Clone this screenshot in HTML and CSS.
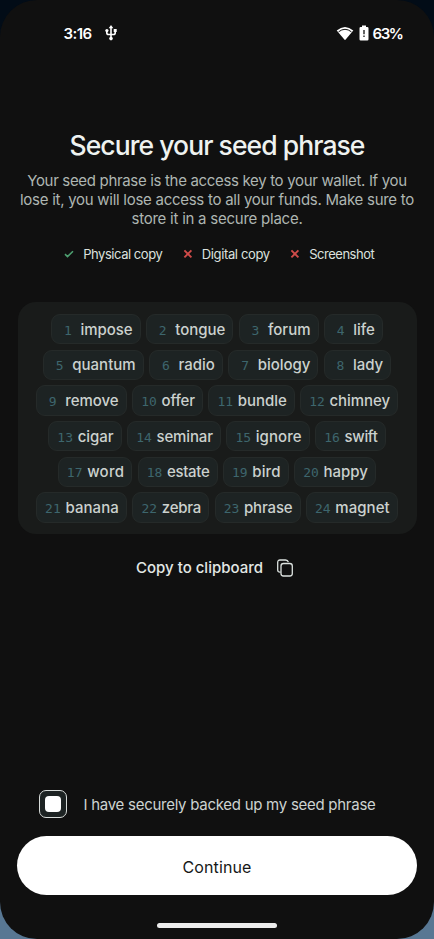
FILE: index.html
```html
<!DOCTYPE html>
<html lang="en">
<head>
<meta charset="utf-8">
<title>Secure your seed phrase</title>
<link rel="stylesheet" href="styles.css">
</head>
<body>
<div class="screen">
  <header class="status">
    <span class="time"><span data-w="28">3:16</span></span>
    <svg class="usb" viewBox="0 0 12 16" width="12" height="16"><path d="M6 2v11M1.8 5.5v2.2q0 1.8 1.8 1.8h4.8q1.8 0 1.8-1.8V5" fill="none" stroke="#fff" stroke-width="1.6"/><path d="M6 0l2.3 3.3H3.7z" fill="#fff"/><circle cx="1.9" cy="5.6" r="1.6" fill="#fff"/><path d="M8.7 4h3v3h-3z" fill="#fff"/><circle cx="6" cy="13.6" r="1.8" fill="#fff"/></svg>
    <svg class="wifi" viewBox="0 0 18 15" width="18" height="15"><path d="M.7 4.4Q9-2.6 17.3 4.4L9 14.3z" fill="#fff"/><path d="M2.6 5.8Q9 .8 15.4 5.8" fill="none" stroke="#101010" stroke-width="1"/></svg>
    <svg class="battery" viewBox="0 0 10 16" width="10" height="16"><path d="M3 .5h4V2h1.3q1.2 0 1.2 1.2v11q0 1.3-1.2 1.3H1.7q-1.2 0-1.2-1.3v-11Q.5 2 1.7 2H3z" fill="#fff"/><path d="M5 5v4.3M5 10.5V12" stroke="#101010" stroke-width="1.3"/></svg>
    <span class="percent"><span data-w="30">63%</span></span>
  </header>

  <h1><span data-w="295">Secure your seed phrase</span></h1>
  <p class="intro">
    <span data-w="379.5">Your seed phrase is the access key to your wallet. If you</span>
    <span data-w="394">lose it, you will lose access to all your funds. Make sure to</span>
    <span data-w="171">store it in a secure place.</span>
  </p>

  <ul class="tips">
    <li><svg viewBox="0 0 10 8" width="10" height="8"><path d="M1 4.2l2.5 2.4L9 1.2" fill="none" stroke="#4d9f70" stroke-width="1.6"/></svg><span data-w="79">Physical copy</span></li>
    <li><svg viewBox="0 0 10 10" width="10" height="10"><path d="M1.4 1.4l7 7M8.4 1.4l-7 7" stroke="#cf4b49" stroke-width="1.9"/></svg><span data-w="68">Digital copy</span></li>
    <li><svg viewBox="0 0 10 10" width="10" height="10"><path d="M1.4 1.4l7 7M8.4 1.4l-7 7" stroke="#cf4b49" stroke-width="1.9"/></svg><span data-w="65">Screenshot</span></li>
  </ul>

  <section class="phrase">
    <div class="row"><div class="chip"><i>1</i><span data-w="52">impose</span></div><div class="chip"><i>2</i><span data-w="50">tongue</span></div><div class="chip"><i>3</i><span data-w="42.5">forum</span></div><div class="chip"><i>4</i><span data-w="21.5">life</span></div></div>
    <div class="row"><div class="chip"><i>5</i><span data-w="63.5">quantum</span></div><div class="chip"><i>6</i><span data-w="36.5">radio</span></div><div class="chip"><i>7</i><span data-w="52.5">biology</span></div><div class="chip"><i>8</i><span data-w="30">lady</span></div></div>
    <div class="row"><div class="chip"><i>9</i><span data-w="53.5">remove</span></div><div class="chip"><i>10</i><span data-w="33.5">offer</span></div><div class="chip"><i>11</i><span data-w="49">bundle</span></div><div class="chip"><i>12</i><span data-w="60.5">chimney</span></div></div>
    <div class="row"><div class="chip"><i>13</i><span data-w="36">cigar</span></div><div class="chip"><i>14</i><span data-w="56.5">seminar</span></div><div class="chip"><i>15</i><span data-w="46">ignore</span></div><div class="chip"><i>16</i><span data-w="33">swift</span></div></div>
    <div class="row"><div class="chip"><i>17</i><span data-w="37">word</span></div><div class="chip"><i>18</i><span data-w="42.5">estate</span></div><div class="chip"><i>19</i><span data-w="28.5">bird</span></div><div class="chip"><i>20</i><span data-w="44.5">happy</span></div></div>
    <div class="row"><div class="chip"><i>21</i><span data-w="53.5">banana</span></div><div class="chip"><i>22</i><span data-w="39.5">zebra</span></div><div class="chip"><i>23</i><span data-w="48.5">phrase</span></div><div class="chip"><i>24</i><span data-w="54.5">magnet</span></div></div>
  </section>

  <div class="copy"><span data-w="127">Copy to clipboard</span><svg viewBox="0 0 18 18" width="18" height="18" fill="none" stroke="#dce2df" stroke-width="1.3"><rect x="5" y="4.5" width="11.3" height="12.5" rx="2.5"/><path d="M4.6 13.2H4Q1.7 13.2 1.7 11V3.5Q1.7 1 4 1H9.5Q11.8 1 12.4 3.2"/></svg></div>

  <div class="confirm"><div class="box"><div class="mark"></div></div><span data-w="292">I have securely backed up my seed phrase</span></div>
  <div class="button"><span data-w="69">Continue</span></div>
  <div class="handle"></div>
</div>
<script src="fit.js"></script>
</body>
</html>
```
FILE: styles.css
```css
* { box-sizing: border-box; }
body {
  margin: 0;
  height: 939px;
  overflow: hidden;
  background: linear-gradient(#020c17 50%, #587793 50%);
  font-family: Inter, "Liberation Sans", sans-serif;
}
[data-w] { display: inline-block; white-space: nowrap; }
.screen {
  height: 939px;
  border-radius: 37px;
  background: #101010;
  display: flex;
  flex-direction: column;
  overflow: hidden;
}
.status {
  height: 66px;
  flex: none;
  padding: 0 31.5px 0 63.5px;
  display: flex;
  align-items: center;
  color: #fff;
  font-size: 15px;
  font-weight: 600;
}
.usb { margin-left: 13.5px; }
.wifi { margin-left: auto; }
.battery { margin: 0 4px 0 5px; }
h1 {
  margin: 61px 0 0;
  text-align: center;
  font-size: 26.5px;
  line-height: 36px;
  font-weight: 450;
  color: #eef2f0;
}
.intro {
  margin: 7.5px 0 0;
  display: flex;
  flex-direction: column;
  align-items: center;
  font-size: 15px;
  line-height: 19.3px;
  color: #aeb6b2;
}
.tips {
  margin: 15.5px 0 0;
  padding: 0 0 0 4.5px;
  list-style: none;
  display: flex;
  justify-content: center;
  gap: 20.5px;
  font-size: 13px;
  line-height: 20px;
  color: #dce1df;
}
.tips li { display: flex; align-items: center; gap: 9px; }
.phrase {
  margin: 38.5px 17.5px 0;
  height: 232px;
  padding-top: 11.5px;
  border-radius: 18px;
  background: #191b1a;
  display: flex;
  flex-direction: column;
  gap: 5.2px;
  flex: none;
}
.row { display: flex; justify-content: center; gap: 5.4px; }
.chip {
  height: 30.5px;
  padding: 0 7.1px 0 7.8px;
  border: 1px solid #252a29;
  border-radius: 9px;
  background: #1d2323;
  display: flex;
  align-items: center;
  color: #cbd1ce;
  font-size: 15px;
  font-weight: 500;
}
.chip i {
  width: 16px;
  margin: 2px 4.5px 0 0;
  text-align: center;
  font: 13px "DejaVu Sans Mono", monospace;
  color: #3d666d;
}
.copy {
  height: 24px;
  margin: 21.5px 0 0 136px;
  display: flex;
  align-items: center;
  gap: 13px;
  font-size: 15px;
  font-weight: 500;
  color: #e3e8e5;
}
.confirm {
  margin: auto 0 0 39px;
  height: 28px;
  display: flex;
  align-items: center;
  gap: 16.5px;
  font-size: 15px;
  color: #cdd3d0;
}
.box {
  width: 28px;
  height: 28px;
  border: 1.5px solid #d7dbd9;
  border-radius: 7px;
  background: #1d2323;
  display: grid;
  place-items: center;
}
.mark { width: 16px; height: 16px; border-radius: 4px; background: #fff; }
.button {
  height: 59px;
  margin: 18px 17px 0;
  border-radius: 30px;
  background: #fff;
  display: grid;
  place-items: center;
  padding-top: 2px;
  font-size: 16px;
  color: #161818;
}
.handle {
  width: 120px;
  height: 5px;
  margin: 28px auto 11px;
  border-radius: 3px;
  background: #ececec;
}
```
FILE: fit.js
```js
// Tracks each label so that it fills its design width.
document.querySelectorAll("[data-w]").forEach((el) => {
  const width = Number(el.dataset.w);
  const natural = el.getBoundingClientRect().width;
  el.style.letterSpacing = (width - natural) / el.textContent.length + "px";
});
```
